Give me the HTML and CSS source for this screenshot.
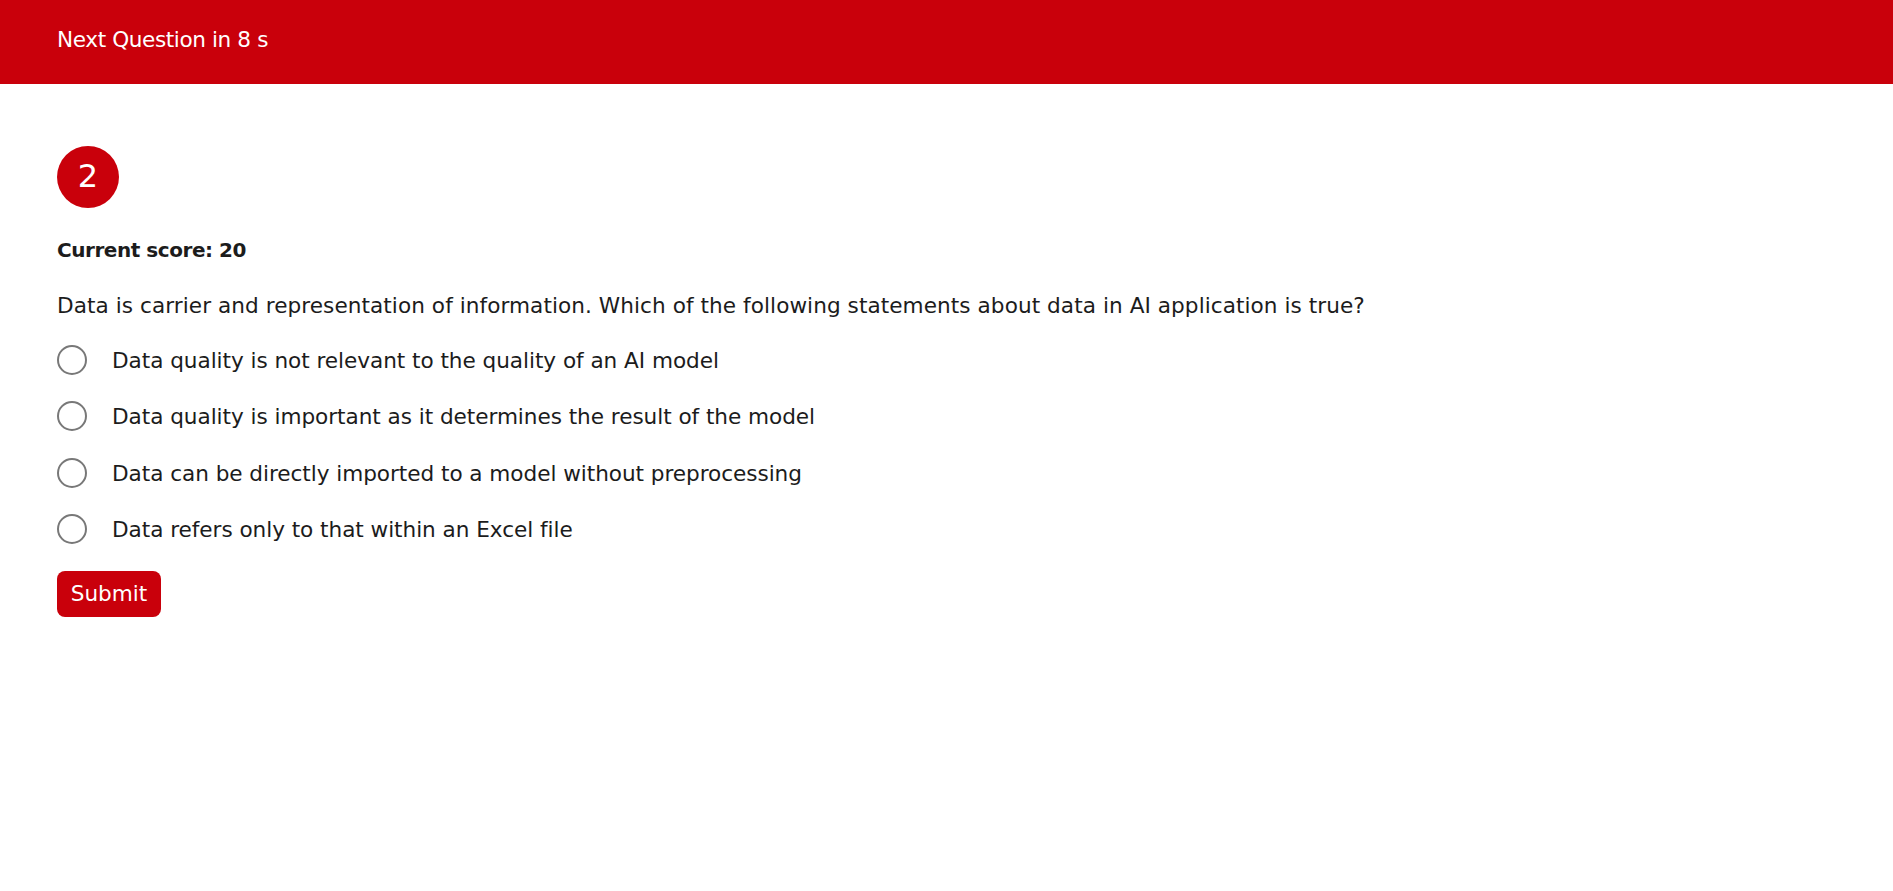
FILE: index.html
```html
<!DOCTYPE html>
<html lang="en">
<head>
<meta charset="utf-8">
<title>Quiz</title>
<link rel="stylesheet" href="styles.css">
</head>
<body>
<header class="topbar">
  <span class="countdown">Next Question in 8 s</span>
</header>
<main class="quiz">
  <div class="qnum">2</div>
  <p class="score">Current score: 20</p>
  <p class="question">Data is carrier and representation of information. Which of the following statements about data in AI application is true?</p>
  <div class="options">
    <label class="option"><span class="radio"></span><span class="opt-text">Data quality is not relevant to the quality of an AI model</span></label>
    <label class="option"><span class="radio"></span><span class="opt-text">Data quality is important as it determines the result of the model</span></label>
    <label class="option"><span class="radio"></span><span class="opt-text">Data can be directly imported to a model without preprocessing</span></label>
    <label class="option"><span class="radio"></span><span class="opt-text">Data refers only to that within an Excel file</span></label>
  </div>
  <button class="submit" type="button">Submit</button>
</main>
</body>
</html>
```
FILE: styles.css
```css
* { box-sizing: border-box; }
html, body { margin: 0; padding: 0; background: #ffffff; }
body {
  font-family: "DejaVu Sans", sans-serif;
  font-size: 21.6px;
  color: #1c1c1c;
}
.topbar {
  height: 83.5px;
  background: #c9000b;
  display: flex;
  align-items: center;
  padding: 0 0 3px 57px;
}
.countdown {
  color: #ffffff;
  font-size: 21.6px;
  letter-spacing: -0.4px;
  line-height: 32px;
}
.quiz {
  padding: 62px 0 0 57px;
  display: flex;
  flex-direction: column;
  align-items: flex-start;
}
.qnum {
  width: 62px;
  height: 62px;
  border-radius: 50%;
  background: #c9000b;
  color: #ffffff;
  font-size: 32px;
  display: flex;
  align-items: center;
  justify-content: center;
  padding-bottom: 2px;
}
.score {
  margin: 27.5px 0 0;
  font-size: 20px;
  font-weight: bold;
  letter-spacing: -0.45px;
  line-height: 30px;
}
.question {
  margin: 25.4px 0 0;
  line-height: 32px;
  letter-spacing: 0.06px;
}
.options {
  margin-top: 22.5px;
  display: flex;
  flex-direction: column;
  gap: 24.5px;
}
.option {
  display: flex;
  align-items: center;
  height: 32px;
  line-height: 32px;
  cursor: pointer;
}
.radio {
  width: 30px;
  height: 30px;
  border: 2px solid #787878;
  border-radius: 50%;
  flex: none;
  margin: 0 25px 2px 0;
  background: #fff;
}
.opt-text {
  letter-spacing: -0.05px;
}
.submit {
  margin-top: 24.5px;
  height: 46px;
  padding: 0 13.7px;
  border: none;
  border-radius: 8px;
  background: #c9000b;
  color: #ffffff;
  font-family: "DejaVu Sans", sans-serif;
  font-size: 21.6px;
  display: inline-flex;
  align-items: center;
  cursor: pointer;
}
```
